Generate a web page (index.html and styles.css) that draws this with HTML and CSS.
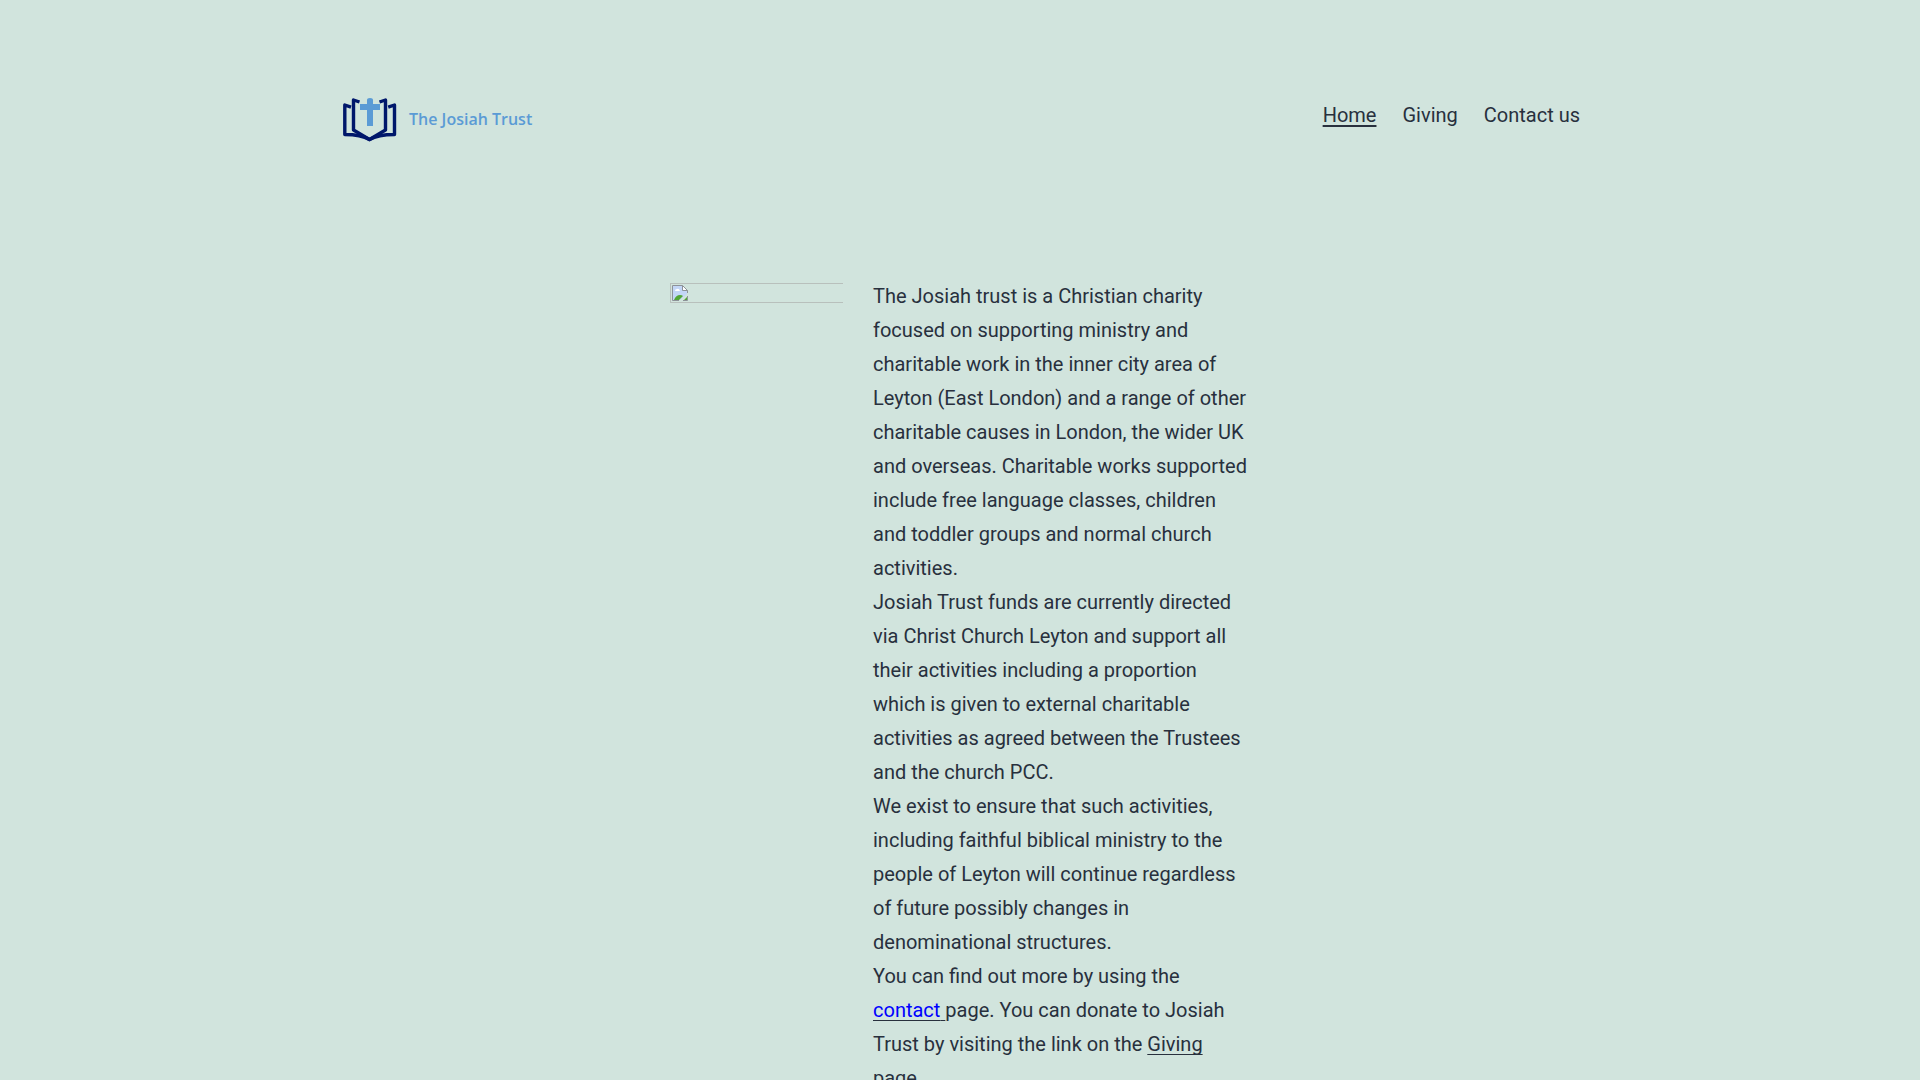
FILE: index.html
```
<!DOCTYPE html>
<html lang="en-GB">
<head>
	<meta charset="UTF-8">
	<title>The Josiah Trust</title>
	<meta name="viewport" content="width=device-width, initial-scale=1">
	<link rel="stylesheet" href="styles.css">
</head>
<body>
	<header class="site-header">
		<a class="site-logo" href="#">
			<svg class="logo-mark" viewBox="0 0 56 46" aria-hidden="true">
				<g fill="none" stroke="#00176b" stroke-width="3.400" stroke-linejoin="round">
					<path d="M9 9.200L2.800 7v29.500C12 36.500 20 37 27.500 41.500C35 37 43 36.500 52.500 36.500V7L46.200 9.200"/>
					<path d="M17.500 4L11.500 2v30L27.500 41.500L43.500 32V2l-6 2"/>
				</g>
				<path fill="#5b9bd5" d="M25 2q0-2 3-2t3 2v4h7v6h-7v16h-6V12h-7V6h7z"/>
			</svg>
			<span class="logo-name">The Josiah Trust</span>
		</a>
		<nav class="main-nav">
			<a class="current" href="#">Home</a>
			<a href="#">Giving</a>
			<a href="#contact">Contact us</a>
		</nav>
	</header>
	<main>
		<div class="media-text">
			<figure class="media">
				<svg class="missing-icon" viewBox="0 0 16 16" aria-hidden="true">
					<path fill="#c3d6f6" d="M1 1h9l5 5v3l-7 6H1z"/>
					<path fill="#fff" d="M3 6q0-2 2-2q2-1 3 2zM11 1l4 4h-4z"/>
					<path fill="#52a735" d="M2 15q2-5 6-5q2 0 3 1l-4 4zM12 15l3-3v3z"/>
					<path fill="none" stroke="#8d9298" d="M7 15.500H.5V.5h10l5 5V8M10.500.5v5h5M11 15.500h4.500V11"/>
				</svg>
			</figure>
			<div class="content">
				<p>The Josiah trust is a Christian charity focused on supporting ministry and charitable work in the inner city area of Leyton (East London) and a range of other charitable causes in London, the wider UK and overseas. Charitable works supported include free language classes, children and toddler groups and normal church activities.</p>
				<p>Josiah Trust funds are currently directed via Christ Church Leyton and support all their activities including a proportion which is given to external charitable activities as agreed between the Trustees and the church PCC.</p>
				<p>We exist to ensure that such activities, including faithful biblical ministry to the people of Leyton will continue regardless of future possibly changes in denominational structures.</p>
				<p>You can find out more by using the <a href="#contact"><span class="blue">contact</span> </a>page. You can donate to Josiah Trust by visiting the link on the <a href="#">Giving</a> page.</p>
			</div>
		</div>
	</main>
</body>
</html>
```
FILE: styles.css
```
* {
	box-sizing: border-box;
}
body {
	margin: 0;
	background: #d1e4dd;
	color: #28303d;
	font-family: Roboto, "Liberation Sans", sans-serif;
	font-size: 20px;
	line-height: 34px;
}
a {
	color: inherit;
	text-decoration: underline;
	text-decoration-thickness: 1px;
	text-underline-offset: 3px;
	text-decoration-skip-ink: none;
}
.site-header {
	display: flex;
	flex-wrap: wrap;
	justify-content: space-between;
	align-items: flex-start;
	gap: 20px;
	max-width: 1240px;
	margin: 0 auto;
	padding: 98px 0 90px;
}
.site-logo {
	display: flex;
	align-items: flex-start;
	gap: 11px;
	padding-left: 2px;
	color: #5b9bd5;
	text-decoration: none;
}
.logo-mark {
	width: 56px;
	height: 46px;
}
.logo-name {
	font: 600 16px/42px "Open Sans", "Noto Sans", sans-serif;
}
.main-nav {
	display: flex;
	gap: 26px;
}
.main-nav a {
	text-decoration: none;
}
.main-nav .current {
	text-decoration: underline;
	text-decoration-thickness: 2px;
}
main {
	padding: 45px 20px 90px;
}
.media-text {
	display: grid;
	grid-template-columns: 30% 1fr;
	max-width: 580px;
	margin: 0 auto;
}
.media {
	align-self: start;
	display: flex;
	height: 20px;
	margin: 4px 1px 0 0;
	padding: 1px;
	border: 1px solid #b8c0bc;
	border-right: 0;
}
.missing-icon {
	width: 16px;
	height: 16px;
}
.content {
	padding-left: 29px;
}
.content p {
	margin: 0;
}
.blue {
	color: #00f;
}
```
